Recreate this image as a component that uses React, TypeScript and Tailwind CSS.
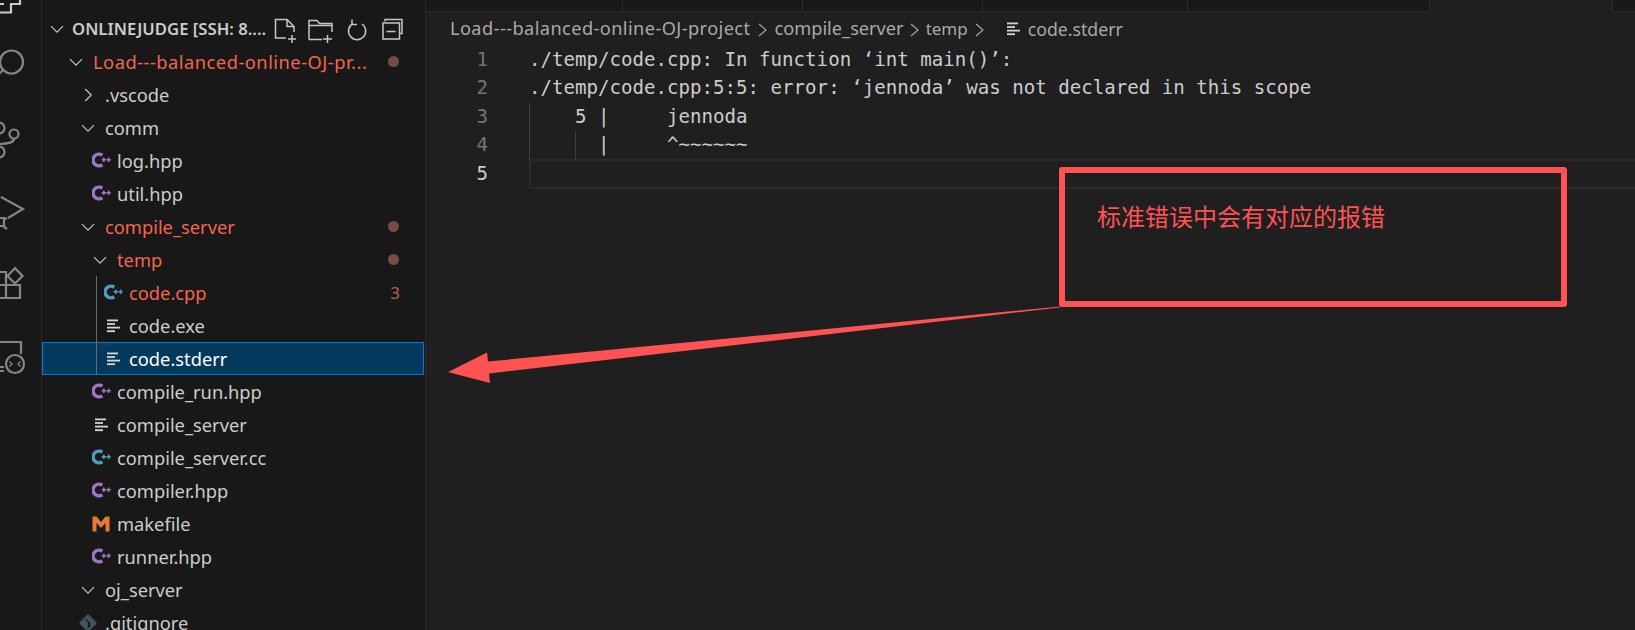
import React from "react";

const UI = "font-['Noto_Sans','Noto_Sans_CJK_SC',sans-serif]";

function Chevron({ open = true }: { open?: boolean }) {
  return (
    <svg className="-ml-px" width="16" height="16" viewBox="0 0 16 16" fill="none" stroke="#c5c5c5" strokeWidth="1.2">
      {open ? <path d="M2 5.200l6 6 6-6" /> : <path d="M5.200 2l6 6-6 6" />}
    </svg>
  );
}

function CppIcon({ color }: { color: string }) {
  return (
    <svg className="-mt-px" width="19" height="18" viewBox="0 0 19 18" fill="none">
      <path d="M10.300 4.300A5.800 5.800 0 1 0 10.300 13.700" stroke={color} strokeWidth="3.600" />
      <path d="M9.600 8.800h4.400M11.800 6.600v4.400M14.400 8.800h4.400M16.600 6.600v4.400" stroke={color} strokeWidth="1.600" />
    </svg>
  );
}

function LinesIcon() {
  return (
    <svg width="15" height="14" viewBox="0 0 15 14" fill="#d4d4d4">
      <rect x="1" y="0.500" width="11" height="1.800" />
      <rect x="1" y="4.100" width="8" height="1.800" />
      <rect x="1" y="7.700" width="13" height="1.800" />
      <rect x="1" y="11.300" width="8" height="1.800" />
    </svg>
  );
}

function MakeIcon() {
  return (
    <svg width="18" height="16" viewBox="0 0 18 16" fill="#e37933">
      <polygon points="0.500,0.500 4.500,0.500 9,6 13.500,0.500 17.500,0.500 17.500,15.500 13.500,15.500 13.500,7 9,12 4.500,7 4.500,15.500 0.500,15.500" />
    </svg>
  );
}

function GitIcon() {
  return (
    <svg className="relative -left-[1px]" width="20" height="20" viewBox="0 0 18 18">
      <rect x="3.200" y="3.200" width="11.600" height="11.600" rx="1.500" fill="#41535b" transform="rotate(45 9 9)" />
      <path d="M7 5.600l3.400 3.400v3.600M9.400 8v5" stroke="#181818" strokeWidth="1.100" fill="none" />
    </svg>
  );
}

type Row = {
  label: string;
  pad: string;
  chevron?: "open" | "closed";
  icon?: React.ReactNode;
  red?: boolean;
  dot?: boolean;
  badge?: string;
  selected?: boolean;
  tight?: string;
};

const purple = "#a074c4";
const blue = "#519aba";

const rows: Row[] = [
  { label: "Load---balanced-online-OJ-pr...", pad: "pl-[27px]", chevron: "open", red: true, dot: true, tight: "tracking-[0.5px]" },
  { label: ".vscode", pad: "pl-[39px]", chevron: "closed" },
  { label: "comm", pad: "pl-[39px]", chevron: "open" },
  { label: "log.hpp", pad: "pl-[47px]", icon: <CppIcon color={purple} /> },
  { label: "util.hpp", pad: "pl-[47px]", icon: <CppIcon color={purple} /> },
  { label: "compile_server", pad: "pl-[39px]", chevron: "open", red: true, dot: true },
  { label: "temp", pad: "pl-[51px]", chevron: "open", red: true, dot: true },
  { label: "code.cpp", pad: "pl-[59px]", icon: <CppIcon color={blue} />, red: true, badge: "3" },
  { label: "code.exe", pad: "pl-[59px]", icon: <LinesIcon /> },
  { label: "code.stderr", pad: "pl-[58px]", icon: <LinesIcon />, selected: true },
  { label: "compile_run.hpp", pad: "pl-[47px]", icon: <CppIcon color={purple} /> },
  { label: "compile_server", pad: "pl-[47px]", icon: <LinesIcon /> },
  { label: "compile_server.cc", pad: "pl-[47px]", icon: <CppIcon color={blue} /> },
  { label: "compiler.hpp", pad: "pl-[47px]", icon: <CppIcon color={purple} /> },
  { label: "makefile", pad: "pl-[47px]", icon: <MakeIcon /> },
  { label: "runner.hpp", pad: "pl-[47px]", icon: <CppIcon color={purple} /> },
  { label: "oj_server", pad: "pl-[39px]", chevron: "open" },
  { label: ".gitignore", pad: "pl-[35px]", icon: <GitIcon /> },
];

function TreeRow({ row }: { row: Row }) {
  const tone = row.selected ? "text-white" : row.red ? "text-[#f3654f]" : "text-[#cccccc]";
  const frame = row.selected ? "bg-[#04395e] border border-[#0078d4] mr-[1px]" : "";
  return (
    <div className={`relative h-[33px] shrink-0 flex items-center ${row.pad} ${frame}`}>
      {row.chevron ? (
        <span className="w-[24px] shrink-0 flex items-center">
          <Chevron open={row.chevron === "open"} />
        </span>
      ) : (
        <span className="w-[28px] shrink-0 flex items-center justify-center pr-[4px]">{row.icon}</span>
      )}
      <span className={`text-[18.3px] whitespace-nowrap ${tone} ${row.tight ?? ""}`}>{row.label}</span>
      {row.dot && <span className="absolute right-[26px] top-[11px] w-[11px] h-[11px] rounded-full bg-[#774c42]" />}
      {row.badge && <span className="absolute right-[25px] top-[4px] text-[17px] text-[#b8604f]">{row.badge}</span>}
    </div>
  );
}

function HeaderActions() {
  const s = { stroke: "#c5c5c5", strokeWidth: 1.5, fill: "none" };
  return (
    <div className="absolute left-[232px] top-[6px]">
      <svg width="130" height="26" viewBox="0 0 130 26" {...s}>
        <path d="M12 20H1.500V1.500H13l7 7V14M13 1.500V8.500h7M14 21h8M18 17v8" />
        <path d="M35 21.500V2.500h8l2.500 3h12.500V14M35.500 7.500h22M48 21.500H35M49 21h9M53.500 17v8" />
        <path d="M79 5.500A8.600 8.600 0 1 0 88 6M78 1.500v5h5" />
        <path d="M111 3.500V1.500h17v14h-3M111 5h14.500v16H109V5h2M112.500 13.500h9" />
      </svg>
    </div>
  );
}

function ActivityIcons() {
  return (
    <svg width="41" height="630" viewBox="0 0 41 630" fill="none" stroke="#858585" strokeWidth="2.200">
      <path d="M20 0v4H11v8.500H0M0 4h4" stroke="#c9c9c9" />
      <circle cx="11.500" cy="62" r="11.500" />
      <path d="M3 70l-5 5" />
      <circle cx="14" cy="134" r="4.500" />
      <circle cx="-1" cy="128" r="5.500" />
      <circle cx="-1" cy="152" r="5.500" />
      <path d="M14 139c0 4-7 4.500-14 5" />
      <path d="M1 197l22 12-15 9" />
      <path d="M0 218h4v8H0M3 220l4-2M3 226l4 3" />
      <path d="M0 272h6v26H0M0 285h20v13H0M6 272v13" />
      <path d="M15 268l7.500 8-7.500 7.500-7.500-7.500z" />
      <path d="M0 342h21v12" />
      <circle cx="15" cy="364" r="9" />
      <path d="M0 367h4M0 371h4" />
      <path d="M9.500 361.500l2.500 2.500-2.500 2.500M20.500 361.500l-2.500 2.500 2.500 2.500" strokeWidth="1.400" />
    </svg>
  );
}

const codeLines = [
  "./temp/code.cpp: In function ‘int main()’:",
  "./temp/code.cpp:5:5: error: ‘jennoda’ was not declared in this scope",
  "    5 |     jennoda",
  "      |     ^~~~~~~",
  "",
];

function Crumb() {
  return (
    <svg width="12" height="16" viewBox="0 0 12 16" fill="none" stroke="#a9a9a9" strokeWidth="1.100" className="inline">
      <path d="M2 2l7 6-7 6" />
    </svg>
  );
}

export default function App() {
  return (
    <div className={`relative w-[1635px] h-[630px] overflow-hidden flex bg-[#1f1f1f] ${UI}`}>
      <div className="w-[42px] shrink-0 bg-[#181818] border-r border-[#2b2b2b]">
        <ActivityIcons />
      </div>

      <div className="relative w-[384px] shrink-0 bg-[#181818] border-r border-[#2b2b2b] flex flex-col pt-[12px] overflow-hidden">
        <div className="relative h-[33px] shrink-0 flex items-center pl-[8px]">
          <span className="w-[22px] shrink-0 flex items-center">
            <Chevron />
          </span>
          <span className="text-[16.7px] font-semibold text-[#cccccc] whitespace-nowrap">ONLINEJUDGE [SSH: 8....</span>
          <HeaderActions />
        </div>
        {rows.map((r, i) => (
          <TreeRow key={i} row={r} />
        ))}
        <div className="absolute left-[54px] top-[276px] h-[99px] w-px bg-[#6b6b6b]" />
      </div>

      <div className="flex-1 min-w-0 flex flex-col">
        <div className="h-[12px] shrink-0 flex">
          <div className="w-[197px] bg-[#181818] border-r border-b border-[#2b2b2b]" />
          <div className="w-[180px] bg-[#181818] border-r border-b border-[#2b2b2b]" />
          <div className="w-[180px] bg-[#181818] border-r border-b border-[#2b2b2b]" />
          <div className="w-[205px] bg-[#181818] border-r border-b border-[#2b2b2b]" />
          <div className="w-[242px] bg-[#181818] border-r border-b border-[#2b2b2b]" />
          <div className="w-[183px] bg-[#1f1f1f] border-r border-[#2b2b2b]" />
          <div className="flex-1 bg-[#181818] border-b border-[#2b2b2b]" />
        </div>

        <div className="h-[34px] shrink-0 flex items-center pl-[24px] text-[18.2px] text-[#a9a9a9] whitespace-nowrap">
          <span className="tracking-[0.42px]">Load---balanced-online-OJ-project</span>
          <span className="mx-[6px]"><Crumb /></span>
          <span>compile_server</span>
          <span className="ml-[5px] mr-[5px]"><Crumb /></span>
          <span className="text-[17px]">temp</span>
          <span className="mx-[6px]"><Crumb /></span>
          <span className="ml-[14px] mr-[7px] flex items-center"><LinesIcon /></span>
          <span className="text-[17.7px]">code.stderr</span>
        </div>

        <div className="relative font-['DejaVu_Sans_Mono',monospace] text-[19.13px]">
          {codeLines.map((line, i) => (
            <div key={i} className="flex h-[28.5px] items-center">
              <span className={`w-[62px] shrink-0 text-right ${i === 4 ? "text-[#cccccc]" : "text-[#6e7681]"}`}>{i + 1}</span>
              {i === 4 ? (
                <span className="ml-[41px] flex-1 h-[30px] -mt-[1px] border-y-2 border-l-2 border-[#2a2a2a]" />
              ) : (
                <span className="ml-[41px] flex-1 h-full flex items-center whitespace-pre text-[#cccccc]">{line}</span>
              )}
            </div>
          ))}
          <div className="absolute left-[103px] top-[57px] h-[57px] w-px bg-[#404040]" />
          <div className="absolute left-[149px] top-[85px] h-[29px] w-px bg-[#404040]" />
        </div>
      </div>

      <div className="absolute left-[1059px] top-[167px] w-[508px] h-[140px] border-[6px] border-[#ff5252] rounded-[3px]">
        <span className="absolute left-[32px] top-[25px] text-[24px] leading-[36px] text-[#ff5252] whitespace-nowrap font-['Noto_Sans_CJK_SC',sans-serif]">标准错误中会有对应的报错</span>
      </div>
      <svg className="absolute left-0 top-0 pointer-events-none" width="1635" height="630" viewBox="0 0 1635 630">
        <polygon fill="#ff5252" points="1060,306.500 488,361.500 487,352.500 448,372 490,383 489,373.500 1060,307.500" />
      </svg>
    </div>
  );
}
